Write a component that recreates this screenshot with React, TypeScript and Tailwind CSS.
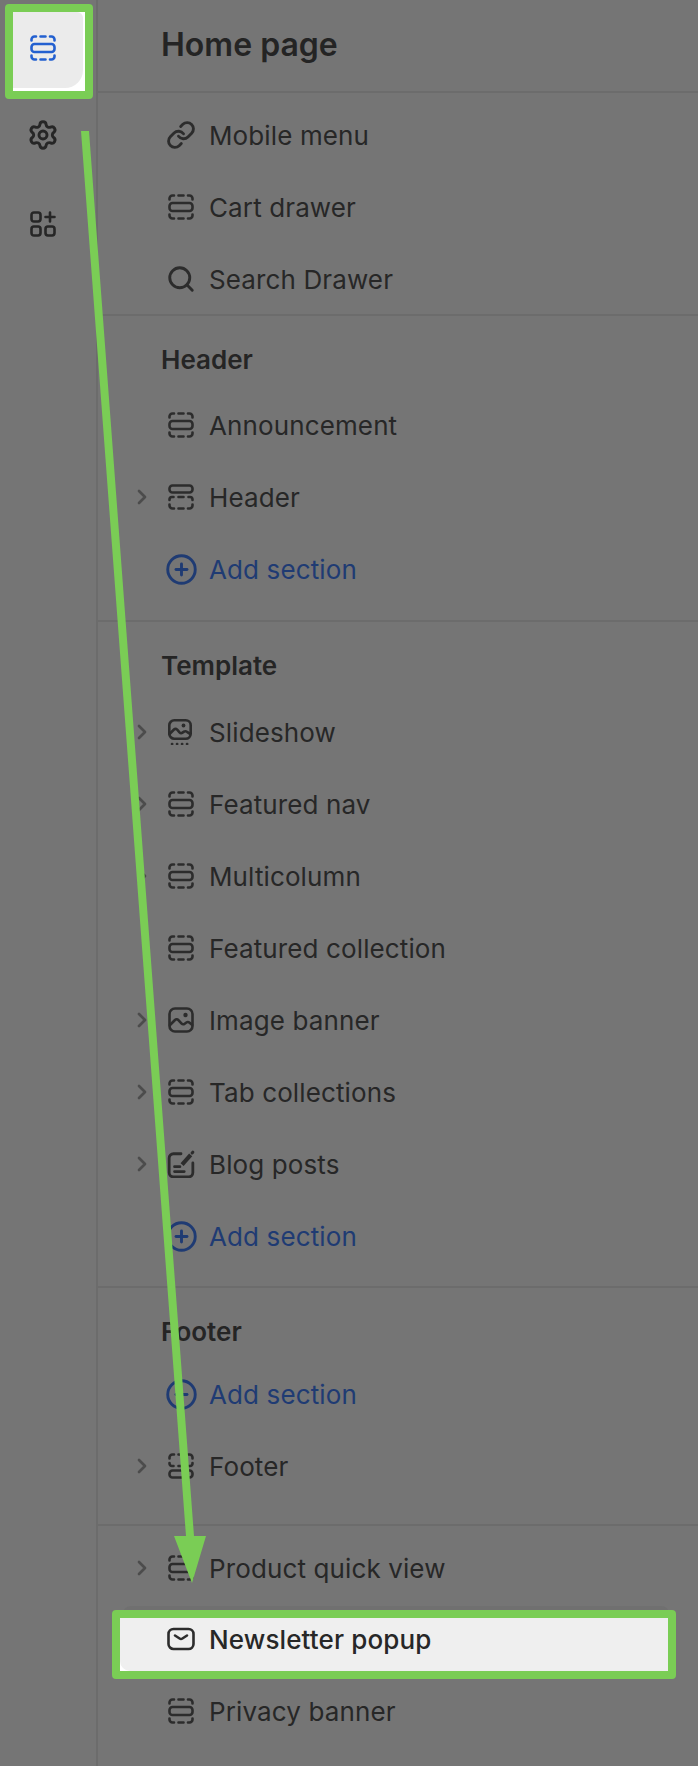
import { ChevronRight, CirclePlus, Link, Search, Settings } from 'lucide-react'
import type { ReactNode } from 'react'

const svgProps = {
  viewBox: '0 0 26 26',
  fill: 'none',
  stroke: 'currentColor',
  strokeWidth: 2.6,
  strokeLinecap: 'round' as const,
  strokeLinejoin: 'round' as const,
  className: 'w-[26px] h-[26px]',
}

function SectionIcon({ className }: { className?: string }) {
  return (
    <svg {...svgProps} className={className ?? svgProps.className}>
      <path d="M1.5 5.5V4.5a3 3 0 0 1 3-3H6M10.5 1.5h5M20 1.5h1.5a3 3 0 0 1 3 3v1" />
      <rect x="1.5" y="9" width="23" height="8" rx="3" />
      <path d="M1.5 20.5v1a3 3 0 0 0 3 3H6M10.5 24.5h5M20 24.5h1.5a3 3 0 0 0 3-3v-1" />
    </svg>
  )
}

function HeaderIcon() {
  return (
    <svg {...svgProps}>
      <rect x="1.5" y="1.5" width="23" height="7" rx="3" />
      <path d="M1.5 16v-.5a2.5 2.5 0 0 1 2.5-2.5h1.5M10.5 13h5M20.5 13H22a2.5 2.5 0 0 1 2.5 2.5v.5M1.5 20.5v1a3 3 0 0 0 3 3H6M10.5 24.5h5M20 24.5h1.5a3 3 0 0 0 3-3v-1" />
    </svg>
  )
}

function FooterIcon() {
  return (
    <svg {...svgProps}>
      <path d="M1.5 5.5V4.5a3 3 0 0 1 3-3H6M10.5 1.5h5M20 1.5h1.5a3 3 0 0 1 3 3v1M1.5 10v.5A2.5 2.5 0 0 0 4 13h1.5M10.5 13h5M20.5 13H22a2.5 2.5 0 0 0 2.5-2.5V10" />
      <rect x="1.5" y="17.5" width="23" height="7" rx="3" />
    </svg>
  )
}

function SlideshowIcon() {
  return (
    <svg {...svgProps}>
      <rect x="1.3" y="1.3" width="21.4" height="18.4" rx="5" />
      <circle cx="15.5" cy="6.5" r="1.9" fill="currentColor" stroke="none" />
      <path d="M1.5 15l4.5-4.5c1-1 2.2-.8 3.2.2l2.3 2.6c1 1 2 1 3 .3l1.5-1c1-.6 2-.5 3 .2l3 2" />
      <path d="M4 25h.2M9 25h.2M14 25h.2M19 25h.2" strokeWidth={2.6} />
    </svg>
  )
}

function ImageIcon() {
  return (
    <svg {...svgProps}>
      <rect x="1.5" y="1.5" width="23" height="23" rx="5.5" />
      <circle cx="17.5" cy="8" r="2.2" fill="currentColor" stroke="none" />
      <path d="M2 18l5-5c1-1 2.4-1 3.4.1l3 3.3c1 1 2.2 1.1 3.3.3l1.7-1.2c1-.7 2.2-.6 3.2.2l2.4 2" />
    </svg>
  )
}

function BlogIcon() {
  return (
    <svg {...svgProps} className="h-[28px] w-[28px] shrink-0 -mx-[1px]">
      <path d="M13 3.5H6a4 4 0 0 0-4 4V21a4 4 0 0 0 4 4h14a4 4 0 0 0 4-4v-9" />
      <path d="M14 13.5l8-9" strokeWidth={3.8} strokeLinecap="butt" />
      <path d="M24 2l-.7.8" strokeWidth={2.8} />
      <path d="M7 15.5h5M7 20h9" />
    </svg>
  )
}

function MailIcon() {
  return (
    <svg {...svgProps} viewBox="0 0 28 26" className="h-[26px] w-[28px] shrink-0 -mx-[1px]">
      <rect x="1.5" y="3" width="25" height="20" rx="5" />
      <path d="M8 9.5l4.6 3a2.6 2.6 0 0 0 2.8 0l4.6-3" />
    </svg>
  )
}

function AppsIcon() {
  return (
    <svg {...svgProps}>
      <rect x="1.5" y="1.5" width="9" height="9" rx="2.4" />
      <rect x="1.5" y="15.5" width="9" height="9" rx="2.4" />
      <rect x="15.5" y="15.5" width="9" height="9" rx="2.4" />
      <path d="M20 1.5v9M15.5 6h9" />
    </svg>
  )
}

const lucideIcon = 'w-[30px] h-[30px] -mx-[2px]'

type Item = { label: string; icon: ReactNode; arrow?: boolean }

function Row({ label, icon, arrow }: Item) {
  return (
    <div className="flex h-[72px] items-center text-[26px] tracking-[0.12px] text-[#272727]">
      <div className="flex w-[70px] shrink-0 justify-end pr-[14px] text-[#4c4c4c]">
        {arrow && <ChevronRight className="w-[24px] h-[24px]" strokeWidth={2.7} />}
      </div>
      <div className="flex w-[26px] shrink-0 items-center justify-center text-[#2c2c2c]">{icon}</div>
      <span className="ml-[15px]">{label}</span>
    </div>
  )
}

function AddSection() {
  return (
    <div className="flex h-[72px] items-center text-[26px] tracking-[0.12px] text-[#1f3b73]">
      <div className="w-[70px] shrink-0" />
      <div className="flex w-[26px] shrink-0 items-center justify-center">
        <CirclePlus className="w-[33px] h-[33px] shrink-0" strokeWidth={2.1} />
      </div>
      <span className="ml-[15px]">Add section</span>
    </div>
  )
}

function Label({ children }: { children: ReactNode }) {
  return <div className="pl-[63px] text-[26px] leading-[30px] font-semibold text-[#252525]">{children}</div>
}

export default function App() {
  return (
    <div className="relative flex h-[1766px] w-[698px] overflow-hidden bg-[#757575] font-[Inter,sans-serif]">
      {/* rail */}
      <div className="flex w-[98px] shrink-0 flex-col border-r-2 border-[#6c6c6c] pt-[4px]">
        <div className="ml-[5px] h-[95px] w-[88px] rounded-[4px] border-8 border-[#7acd55] bg-white">
          <div className="flex h-[76px] w-[70px] items-center justify-center rounded-tr-[6px] rounded-br-[18px] bg-[#ebebeb] pr-[10px] pb-[4px] text-[#2360d0]">
            <SectionIcon />
          </div>
        </div>
        <div className="flex h-[72px] w-[86px] items-center justify-center text-[#262626]">
          <Settings className="w-[32px] h-[32px]" strokeWidth={2.2} />
        </div>
        <div className="mt-[17px] flex h-[72px] w-[86px] items-center justify-center text-[#262626]">
          <AppsIcon />
        </div>
      </div>

      {/* section list */}
      <div className="min-w-0 flex-1">
        <div className="flex h-[93px] items-center border-b-2 border-[#6c6c6c] pl-[63px] pb-[2px] text-[32px] font-semibold text-[#242424]">
          Home page
        </div>

        <div className="border-b-2 border-[#6c6c6c] pt-[6px]">
          <div className="-mb-px">
            <Row label="Mobile menu" icon={<Link className={lucideIcon} strokeWidth={2.3} />} />
            <Row label="Cart drawer" icon={<SectionIcon />} />
            <Row label="Search Drawer" icon={<Search className={lucideIcon} strokeWidth={2.3} />} />
          </div>
        </div>

        <div className="border-b-2 border-[#6c6c6c] pt-[29px] pb-[15px]">
          <Label>Header</Label>
          <div className="mt-[14px]">
            <Row label="Announcement" icon={<SectionIcon />} />
            <Row label="Header" icon={<HeaderIcon />} arrow />
            <AddSection />
          </div>
        </div>

        <div className="border-b-2 border-[#6c6c6c] pt-[29px] pb-[14px]">
          <Label>Template</Label>
          <div className="mt-[15px]">
            <Row label="Slideshow" icon={<SlideshowIcon />} arrow />
            <Row label="Featured nav" icon={<SectionIcon />} arrow />
            <Row label="Multicolumn" icon={<SectionIcon />} arrow />
            <Row label="Featured collection" icon={<SectionIcon />} />
            <Row label="Image banner" icon={<ImageIcon />} arrow />
            <Row label="Tab collections" icon={<SectionIcon />} arrow />
            <Row label="Blog posts" icon={<BlogIcon />} arrow />
            <AddSection />
          </div>
        </div>

        <div className="border-b-2 border-[#6c6c6c] pt-[29px] pb-[22px]">
          <Label>Footer</Label>
          <div className="mt-[11px]">
            <AddSection />
            <Row label="Footer" icon={<FooterIcon />} arrow />
          </div>
        </div>

        <div className="pt-[6px]">
          <Row label="Product quick view" icon={<SectionIcon />} arrow />
          <div className="relative -mt-px">
            <div className="absolute left-[25px] right-[29px] top-[3px] h-[12px] rounded-t-lg bg-[#707070]" />
            <div className="absolute left-[14px] right-[22px] top-[7px] h-[69px] rounded-[4px] border-8 border-[#7acd55] bg-white">
              <div className="h-full w-full rounded-bl-[10px] bg-[#efefef]" />
            </div>
            <div className="relative font-medium">
              <Row label="Newsletter popup" icon={<MailIcon />} />
            </div>
          </div>
          <Row label="Privacy banner" icon={<SectionIcon />} />
        </div>
      </div>

      {/* annotation arrow */}
      <svg className="pointer-events-none absolute left-0 top-0 h-[1766px] w-[698px]" viewBox="0 0 698 1766">
        <polygon points="81,131 89,131 194,1536 206,1536 192,1583 174,1536 186,1536" fill="#7acd55" />
      </svg>
    </div>
  )
}
